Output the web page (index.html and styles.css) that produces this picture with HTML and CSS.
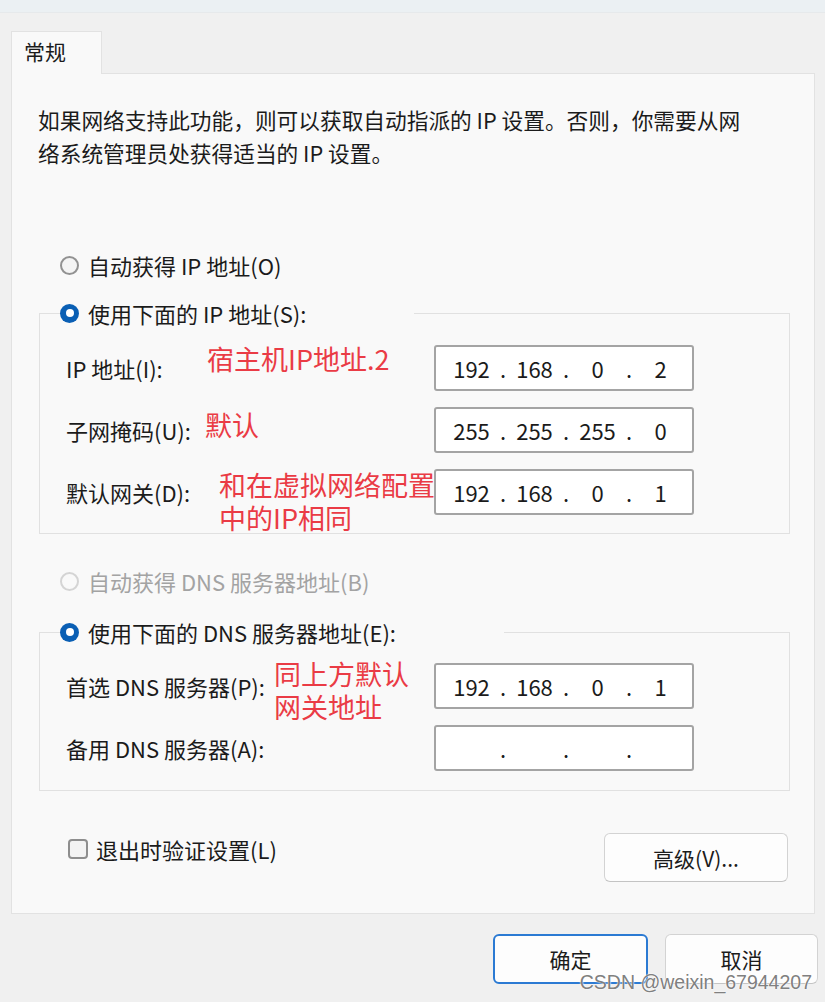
FILE: index.html
```html
<!DOCTYPE html>
<html lang="zh-CN">
<head>
    <meta charset="UTF-8">
    <meta name="viewport" content="width=device-width, initial-scale=1.0">
    <title>Internet 协议版本 4 (TCP/IPv4) 属性</title>
    <link rel="stylesheet" href="styles.css">
</head>
<body>
    <div class="titlebar"></div>
    <div class="sheet">
        <div class="tabs">
            <div class="tab">常规</div>
        </div>
        <div class="panel">
            <p class="intro">如果网络支持此功能，则可以获取自动指派的 IP 设置。否则，你需要从网<br>络系统管理员处获得适当的 IP 设置。</p>

            <div class="choice top-choice">
                <span class="radio"></span>
                <span>自动获得 IP 地址(O)</span>
            </div>
            <fieldset class="group">
                <legend>
                    <div class="choice">
                        <span class="radio checked"></span>
                        <span>使用下面的 IP 地址(S):</span>
                    </div>
                </legend>
                <div class="rows">
                    <div class="row">
                        <span class="label">IP 地址(I):</span>
                        <span class="note note-ip">宿主机IP地址.2</span>
                        <div class="ipbox"><span>192</span><i>.</i><span>168</span><i>.</i><span>0</span><i>.</i><span>2</span></div>
                    </div>
                    <div class="row">
                        <span class="label">子网掩码(U):</span>
                        <span class="note note-mask">默认</span>
                        <div class="ipbox"><span>255</span><i>.</i><span>255</span><i>.</i><span>255</span><i>.</i><span>0</span></div>
                    </div>
                    <div class="row">
                        <span class="label">默认网关(D):</span>
                        <span class="note note-gw">和在虚拟网络配置<br>中的IP相同</span>
                        <div class="ipbox"><span>192</span><i>.</i><span>168</span><i>.</i><span>0</span><i>.</i><span>1</span></div>
                    </div>
                </div>
            </fieldset>

            <div class="choice disabled dns-choice">
                <span class="radio"></span>
                <span>自动获得 DNS 服务器地址(B)</span>
            </div>
            <fieldset class="group group-dns">
                <legend>
                    <div class="choice">
                        <span class="radio checked"></span>
                        <span>使用下面的 DNS 服务器地址(E):</span>
                    </div>
                </legend>
                <div class="rows">
                    <div class="row">
                        <span class="label">首选 DNS 服务器(P):</span>
                        <span class="note note-dns">同上方默认<br>网关地址</span>
                        <div class="ipbox"><span>192</span><i>.</i><span>168</span><i>.</i><span>0</span><i>.</i><span>1</span></div>
                    </div>
                    <div class="row">
                        <span class="label">备用 DNS 服务器(A):</span>
                        <div class="ipbox"><span></span><i>.</i><span></span><i>.</i><span></span><i>.</i><span></span></div>
                    </div>
                </div>
            </fieldset>

            <div class="panel-foot">
                <label class="check">
                    <span class="checkbox"></span>
                    <span>退出时验证设置(L)</span>
                </label>
                <button class="btn btn-advanced">高级(V)...</button>
            </div>
        </div>
    </div>
    <div class="dialog-buttons">
        <button class="btn btn-ok">确定</button>
        <button class="btn btn-cancel">取消</button>
    </div>
    <div class="watermark">CSDN @weixin_67944207</div>
</body>
</html>
```

FILE: styles.css
```css
body {
    margin: 0;
    height: 1002px;
    position: relative;
    overflow: hidden;
    background-color: #f0f0f0;
    color: #1b1b1b;
    font-family: "Noto Sans CJK SC", "Noto Sans", sans-serif;
    font-size: 22px;
}
.titlebar {
    height: 13px;
    background-color: #ebf0f3;
    border-bottom: 1px solid #e6e9eb;
    box-sizing: border-box;
}
.sheet {
    padding: 18px 10px 0 11px;
}
.tabs {
    display: flex;
}
.tab {
    width: 91px;
    height: 43px;
    box-sizing: border-box;
    padding-left: 12px;
    line-height: 38px;
    font-size: 21px;
    background-color: #f9f9f9;
    border: 1px solid #e2e2e2;
    border-bottom: none;
    margin-bottom: -1px;
    position: relative;
    z-index: 1;
}
.panel {
    background-color: #f9f9f9;
    border: 1px solid #e2e2e2;
    padding: 29px 0 31px 26px;
}
.intro {
    margin: 0;
    font-size: 21.7px;
    line-height: 33px;
}
.choice {
    display: flex;
    align-items: center;
    gap: 9px;
    height: 30px;
}
.top-choice {
    margin: 81px 0 0 22px;
}
.dns-choice {
    margin: 32px 0 0 22px;
}
.disabled {
    color: #a3a3a3;
}
.radio {
    width: 19px;
    height: 19px;
    flex-shrink: 0;
    box-sizing: border-box;
    border-radius: 50%;
    border: 2px solid #929292;
    background-color: #f4f4f4;
    position: relative;
}
.disabled .radio {
    border-color: #d4d4d4;
    background-color: #f9f9f9;
}
.radio.checked {
    border: none;
    background-color: #0a5fb4;
}
.radio.checked::after {
    content: "";
    position: absolute;
    left: 5.5px;
    top: 5.5px;
    width: 8px;
    height: 8px;
    border-radius: 50%;
    background-color: #ffffff;
}
.group {
    margin: 18px 24px 0 1px;
    padding: 0;
    border: 1px solid #e1e1e1;
    min-width: 0;
}
.group-dns {
    margin-top: 21px;
}
.group legend {
    margin-left: 20px;
    padding: 0 108px 0 0;
}
.rows {
    display: flex;
    flex-direction: column;
    gap: 16px;
    padding: 17px 0 18px 26px;
}
.group-dns .rows {
    padding: 16px 0 19px 26px;
}
.row {
    position: relative;
    display: grid;
    grid-template-columns: 368px 260px;
    align-items: center;
    height: 46px;
}
.note {
    position: absolute;
    color: #ea3b45;
    font-size: 27px;
    line-height: 33px;
    white-space: nowrap;
}
.note-ip {
    left: 141px;
    top: -3px;
}
.note-mask {
    left: 139px;
    top: 1px;
}
.note-gw {
    left: 153px;
    top: -1px;
}
.note-dns {
    left: 208px;
    top: -6px;
}
.ipbox {
    grid-column: 2;
    position: relative;
    z-index: 1;
    display: flex;
    align-items: center;
    height: 46px;
    box-sizing: border-box;
    padding-left: 10px;
    background-color: #ffffff;
    border: 2px solid #a4a4a4;
    border-radius: 3px;
    font-size: 22px;
}
.ipbox span {
    width: 51px;
    text-align: center;
}
.ipbox i {
    width: 12px;
    font-style: normal;
    text-align: center;
}
.panel-foot {
    display: flex;
    justify-content: space-between;
    align-items: flex-start;
    margin: 42px 26px 0 30px;
}
.check {
    display: flex;
    align-items: center;
    gap: 8px;
    height: 30px;
    margin-top: 1px;
}
.checkbox {
    width: 20px;
    height: 20px;
    box-sizing: border-box;
    border: 2px solid #8e8e8e;
    border-radius: 4px;
    background-color: #f3f3f3;
}
.btn {
    font-family: inherit;
    font-size: 21px;
    color: #1b1b1b;
    background-color: #fdfdfd;
    border: 1px solid #d3d3d3;
    border-bottom-color: #c4c4c4;
    border-radius: 6px;
    padding: 0;
}
.btn-advanced {
    width: 184px;
    height: 49px;
}
.dialog-buttons {
    display: flex;
    justify-content: flex-end;
    gap: 17px;
    padding: 20px 7px 0 0;
}
.btn-ok {
    width: 155px;
    height: 50px;
    border: 2px solid #2b7ad3;
}
.btn-cancel {
    width: 153px;
    height: 50px;
}
.watermark {
    position: absolute;
    right: 13px;
    top: 970px;
    font-family: "Liberation Sans", Arial, sans-serif;
    font-size: 19.5px;
    line-height: 24px;
    color: rgba(110, 110, 110, 0.9);
    text-shadow: 0 0 2px #ffffff, 0 0 1px #ffffff;
}
```
